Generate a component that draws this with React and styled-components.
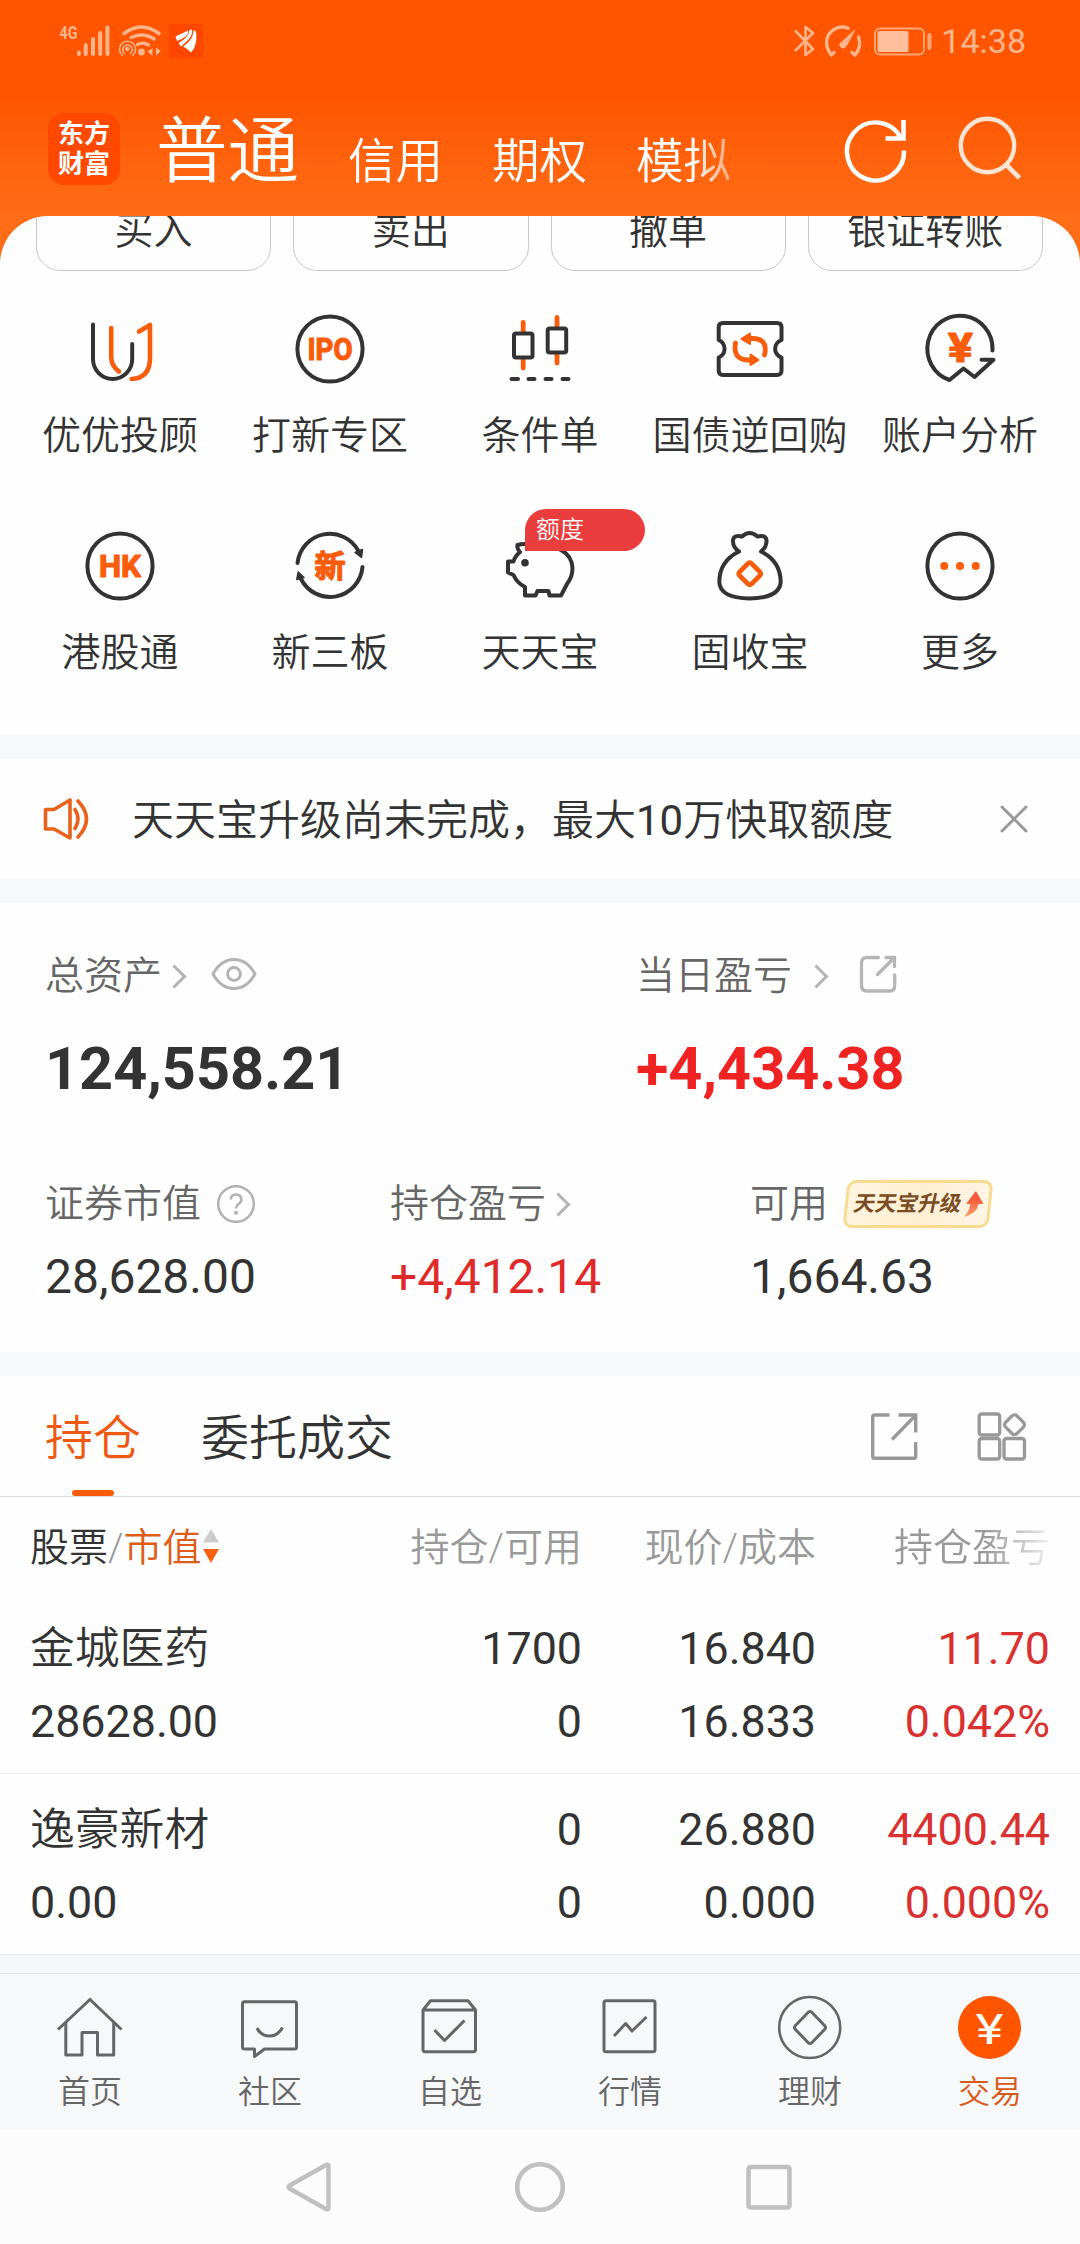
import React from "react";
import styled, { createGlobalStyle } from "styled-components";

const DARK = "#333333";
const ORANGE = "#f95d0b";

const shortcuts = [
  { label: "优优投顾", icon: <AdvisorIcon /> },
  { label: "打新专区", icon: <IpoIcon /> },
  { label: "条件单", icon: <CandleIcon /> },
  { label: "国债逆回购", icon: <RepoIcon /> },
  { label: "账户分析", icon: <AnalysisIcon /> },
  { label: "港股通", icon: <HkIcon /> },
  { label: "新三板", icon: <NewBoardIcon /> },
  { label: "天天宝", icon: <PiggyIcon />, badge: "额度" },
  { label: "固收宝", icon: <MoneyBagIcon /> },
  { label: "更多", icon: <MoreIcon /> },
];

const holdings = [
  {
    name: "金城医药",
    value: "28628.00",
    amount: "1700",
    available: "0",
    price: "16.840",
    cost: "16.833",
    profit: "11.70",
    rate: "0.042%",
  },
  {
    name: "逸豪新材",
    value: "0.00",
    amount: "0",
    available: "0",
    price: "26.880",
    cost: "0.000",
    profit: "4400.44",
    rate: "0.000%",
  },
];

const navItems = [
  { label: "首页", icon: <HomeIcon /> },
  { label: "社区", icon: <CommunityIcon /> },
  { label: "自选", icon: <WatchlistIcon /> },
  { label: "行情", icon: <MarketIcon /> },
  { label: "理财", icon: <WealthIcon /> },
  { label: "交易", icon: <TradeIcon />, active: true },
];

function App() {
  return (
    <Page>
      <GlobalStyle />
      <Header>
        <StatusBar>
          <StatusGroup $gap="8px">
            <SignalIcon />
            <WifiIcon />
            <AppBadgeIcon />
          </StatusGroup>
          <StatusGroup $gap="9px">
            <BluetoothIcon />
            <GaugeIcon />
            <BatteryIcon />
            <Clock>14:38</Clock>
          </StatusGroup>
        </StatusBar>
        <TitleBar>
          <Logo>
            <span>东方</span>
            <span>财富</span>
          </Logo>
          <AccountTabs>
            <AccountTab $active>普通</AccountTab>
            <AccountTab>信用</AccountTab>
            <AccountTab>期权</AccountTab>
            <AccountTab>模拟</AccountTab>
          </AccountTabs>
          <HeaderActions>
            <RefreshIcon />
            <SearchIcon />
          </HeaderActions>
        </TitleBar>
      </Header>

      <PanelWrap>
        <Panel>
          <QuickActions>
            <QuickButton>买入</QuickButton>
            <QuickButton>卖出</QuickButton>
            <QuickButton>撤单</QuickButton>
            <QuickButton>银证转账</QuickButton>
          </QuickActions>
          <ShortcutGrid>
            {shortcuts.map((item) => (
              <Shortcut key={item.label}>
                {item.icon}
                {item.badge && <ShortcutBadge>{item.badge}</ShortcutBadge>}
                <ShortcutLabel>{item.label}</ShortcutLabel>
              </Shortcut>
            ))}
          </ShortcutGrid>
        </Panel>
      </PanelWrap>
      <Divider />

      <Notice>
        <SpeakerIcon />
        <NoticeText>
          天天宝升级尚未完成，最大<Num>10</Num>万快取额度
        </NoticeText>
        <CloseIcon />
      </Notice>
      <Divider />

      <Assets>
        <AssetRow $columns="591px 1fr">
          <div>
            <AssetLabel>
              总资产
              <Chevron $left="9px" />
              <EyeIcon />
            </AssetLabel>
            <TotalValue>124,558.21</TotalValue>
          </div>
          <div>
            <AssetLabel>
              当日盈亏
              <Chevron $left="21px" />
              <ShareIcon />
            </AssetLabel>
            <TotalValue $up>+4,434.38</TotalValue>
          </div>
        </AssetRow>
        <AssetRow $columns="345px 360px 1fr" $top="80px">
          <div>
            <AssetLabel>
              证券市值
              <HelpIcon />
            </AssetLabel>
            <AssetValue>28,628.00</AssetValue>
          </div>
          <div>
            <AssetLabel>
              持仓盈亏
              <Chevron $left="9px" />
            </AssetLabel>
            <AssetValue $up>+4,412.14</AssetValue>
          </div>
          <div>
            <AssetLabel>
              可用
              <UpgradeTag>
                <UpgradeText>天天宝升级</UpgradeText>
                <UpArrowIcon />
              </UpgradeTag>
            </AssetLabel>
            <AssetValue>1,664.63</AssetValue>
          </div>
        </AssetRow>
      </Assets>
      <Divider />

      <Tabs>
        <Tab $active>持仓</Tab>
        <Tab>委托成交</Tab>
        <TabTools>
          <ExportIcon />
          <GridIcon />
        </TabTools>
      </Tabs>

      <TableHead>
        <SortCell>
          <b>股票</b>/<em>市值</em>
          <SortIcon />
        </SortCell>
        <HeadCell>持仓/可用</HeadCell>
        <HeadCell>现价/成本</HeadCell>
        <HeadCell $fade>持仓盈亏</HeadCell>
      </TableHead>
      {holdings.map((row) => (
        <TableRow key={row.name}>
          <Cell $left>
            <StockName>{row.name}</StockName>
            <span>{row.value}</span>
          </Cell>
          <Cell>
            <span>{row.amount}</span>
            <span>{row.available}</span>
          </Cell>
          <Cell>
            <span>{row.price}</span>
            <span>{row.cost}</span>
          </Cell>
          <Cell $up>
            <span>{row.profit}</span>
            <span>{row.rate}</span>
          </Cell>
        </TableRow>
      ))}
      <Filler />

      <BottomNav>
        {navItems.map((item) => (
          <NavItem key={item.label} $active={item.active}>
            {item.icon}
            {item.label}
          </NavItem>
        ))}
      </BottomNav>
      <SystemNav>
        <svg width="52" height="52" fill="none" stroke="#c0c0c0" strokeWidth="4.4" strokeLinejoin="round">
          <path d="M44.500 4.5V47.5Q44 49 42 48L5.500 27.500Q3.500 26 5.500 24.500L42 4Q44 3 44.500 4.500Z" />
        </svg>
        <svg width="52" height="52" fill="none" stroke="#c0c0c0" strokeWidth="4.6">
          <circle cx="26" cy="26" r="22.800" />
        </svg>
        <svg width="52" height="52" fill="none" stroke="#c0c0c0" strokeWidth="4.6">
          <rect x="4.500" y="6" width="41" height="40.500" rx="2" />
        </svg>
      </SystemNav>
    </Page>
  );
}

/* ---------- status bar icons ---------- */

function SignalIcon() {
  return (
    <svg width="51" height="34" stroke="#ffb58c" strokeWidth="4" strokeLinecap="round">
      <text x="0.500" y="15" fontFamily="Roboto" fontSize="18.500" fontWeight="700" fill="#ffb58c" stroke="none" textLength="18" lengthAdjust="spacingAndGlyphs">
        4G
      </text>
      <path d="M19.900 28.500V30M26.700 21V30M34 15V30M41.200 9V30M48.400 3.500V30" />
    </svg>
  );
}

function WifiIcon() {
  return (
    <svg width="43" height="34" fill="none" stroke="#ffb58c" strokeWidth="3" strokeLinecap="round">
      <path d="M6 9.500Q23.500 -3.500 41 9.500" strokeWidth="3.600" />
      <path d="M13 13.500Q25 8 36 15" strokeWidth="3.400" />
      <path d="M19.500 20.500Q25 17.500 30.500 21" strokeWidth="3.400" />
      <circle cx="23.500" cy="28" r="3.400" fill="#ffb58c" stroke="none" />
      <circle cx="9.400" cy="25" r="2.200" fill="#ffb58c" stroke="none" />
      <path d="M6.500 29.500A4.800 4.800 0 1 1 12.500 29.500" strokeWidth="1.600" />
      <path d="M4.500 31.500A8 8 0 1 1 14.500 31.500" strokeWidth="1.600" />
      <path d="M34.500 24V32L29.500 27.500ZM38 23.500V31.500L43 27Z" fill="#ffb58c" stroke="none" />
    </svg>
  );
}

function AppBadgeIcon() {
  return (
    <svg width="34" height="34">
      <rect width="34" height="34" fill="#ff4600" />
      <path d="M6.500 12.500L19 6.500Q20 11 13.500 14.500L8 17Z" fill="#fff" />
      <path d="M20.500 6L23 5.500Q24 12 17.500 17.500L12 22.500L9.500 19Q19.500 14 20.500 6Z" fill="#fff" />
      <path d="M24.500 6L27 7.500Q28.500 16 25 24.500L22 28.500L17.500 24.500L14 22.500Q24.500 16 24.500 6Z" fill="#fff" />
    </svg>
  );
}

function BluetoothIcon() {
  return (
    <svg width="21" height="34" fill="none" stroke="#ffb58c" strokeWidth="2.600" strokeLinejoin="round">
      <path d="M0 6.500L18 25L10.500 31V3L18 9L0 27" />
    </svg>
  );
}

function GaugeIcon() {
  return (
    <svg width="38" height="34" fill="none" stroke="#ffb58c" strokeWidth="3.400" strokeLinecap="round">
      <path d="M23 4.200A15.800 15.800 0 0 0 1.500 18Q1.500 25 6.500 31L9 28.500" />
      <path d="M33.500 13Q37 23 30 31L27 28.500" />
      <path d="M29.500 6.500L21 22.500Q18.500 25.500 15.500 23Q13.500 20 16.500 18Z" fill="#ffb58c" strokeWidth="1" />
    </svg>
  );
}

function BatteryIcon() {
  return (
    <svg width="60" height="34" fill="none" stroke="#ffa877">
      <rect x="3" y="4.500" width="49" height="26" rx="5" strokeWidth="1.800" />
      <rect x="5.500" y="7" width="31" height="21" rx="1.500" fill="#ffbf9b" stroke="none" />
      <path d="M57.500 11V24" strokeWidth="4" strokeLinecap="round" />
    </svg>
  );
}

/* ---------- header icons ---------- */

function RefreshIcon() {
  return (
    <svg width="66" height="66" fill="none" stroke="#fff" strokeWidth="4.400">
      <path d="M61 34.500A28.500 29 0 1 1 57.500 21.500" />
      <path d="M60.500 4V22.500H42.500" strokeWidth="4.600" />
    </svg>
  );
}

function SearchIcon() {
  return (
    <svg width="66" height="66" fill="none" stroke="#ffe3d3" strokeWidth="4.400">
      <circle cx="30.500" cy="29.500" r="26.700" />
      <path d="M49 48.500L62.500 62" strokeWidth="4.600" />
    </svg>
  );
}

/* ---------- shortcut icons ---------- */

function Glyph({ children }) {
  return (
    <svg width="72" height="72" fill="none" stroke={DARK} strokeWidth="4" strokeLinecap="round" strokeLinejoin="round">
      {children}
    </svg>
  );
}

function AdvisorIcon() {
  return (
    <Glyph>
      <path d="M9 11.500V46A19.600 20 0 0 0 48.200 46V31" />
      <path d="M27.200 15V44Q27.200 53 35 58.500M55 18.500L66 12V45Q66 65 47.500 66" stroke={ORANGE} strokeWidth="4.600" />
    </Glyph>
  );
}

function IpoIcon() {
  return (
    <Glyph>
      <circle cx="36" cy="36" r="32.600" />
      <IconText x="36" y="47" fontSize="31" textLength="45" lengthAdjust="spacingAndGlyphs">
        IPO
      </IconText>
    </Glyph>
  );
}

function CandleIcon() {
  return (
    <Glyph>
      <path d="M19.200 9.500V19M19.200 46V55M53 4.500V14M53 41V50" stroke={ORANGE} strokeWidth="4.800" />
      <rect x="10" y="20.500" width="18.500" height="24" rx="2" />
      <rect x="43.700" y="15.500" width="18.500" height="24" rx="2" />
      <path d="M7.500 66H14M24.500 66H30.500M41.500 66H47.500M58.500 66H64.500" />
    </Glyph>
  );
}

function RepoIcon() {
  return (
    <Glyph>
      <path d="M9 10H63Q67.500 10 67.500 14V27C59 30.500 59 41 67.500 44.500V57.500Q67.500 62 63 62H9Q4.700 62 4.700 57.500V44.500C12.500 41 12.500 30.500 4.700 27V14Q4.700 10 9 10Z" />
      <g stroke={ORANGE} strokeWidth="4.800">
        <path d="M21.500 30Q18.500 46.500 34 47H38" />
        <path d="M36.500 41.500V52L44.500 47Z" fill={ORANGE} strokeWidth="2" />
        <path d="M50.500 42Q54.500 26 39 25.500H34" />
        <path d="M36 20.500V31L27.500 25.800Z" fill={ORANGE} strokeWidth="2" />
      </g>
    </Glyph>
  );
}

function AnalysisIcon() {
  return (
    <Glyph>
      <path d="M68.500 37.500A32.600 33 0 1 0 25.500 67L39.500 55.500L50.500 64L69.500 46.800H57.500" />
      <IconText x="36.500" y="48.500" fontSize="41" textLength="25" lengthAdjust="spacingAndGlyphs">
        ¥
      </IconText>
    </Glyph>
  );
}

function HkIcon() {
  return (
    <Glyph>
      <circle cx="36" cy="36" r="32.600" />
      <IconText x="36" y="47" fontSize="31" textLength="42" lengthAdjust="spacingAndGlyphs">
        HK
      </IconText>
    </Glyph>
  );
}

function NewBoardIcon() {
  return (
    <Glyph>
      <path d="M3.500 33A32.600 33 0 0 1 64.500 21" />
      <path d="M61 22.500L68.500 19.500L67.500 27.500Z" fill={DARK} strokeWidth="1.500" />
      <path d="M68.500 37A32.600 33 0 0 1 7 49" />
      <path d="M10 47.500L2.800 49.500L4.200 42Z" fill={DARK} strokeWidth="1.500" />
      <IconText x="36" y="47" fontSize="31">
        新
      </IconText>
    </Glyph>
  );
}

function PiggyIcon() {
  return (
    <Glyph>
      <path d="M28 15Q20 13 13.500 15Q12.500 18 16 22Q11 26 9.500 31.500H4V42.500L9.500 45Q13 53 21 57V65.500H31.500L33.500 61H44.500L45.500 65.500H57L63 54Q68.500 47 68.500 38Q68 26 57 20Q46 15 38 18" />
      <circle cx="21" cy="32.700" r="3.800" fill={DARK} stroke="none" />
    </Glyph>
  );
}

function MoneyBagIcon() {
  return (
    <Glyph>
      <path d="M25 21.500Q18.500 17 19 10Q20 4.500 28 6.500Q35.700 -0.500 43.500 6.500Q51.500 4.500 52.500 10Q53 17 47 21.500Q66.500 31 66.700 52Q65.500 68 35.700 68.500Q6 68 5.300 52Q5.500 31 25 21.500" />
      <path d="M34 33.500L25.500 42Q24 43.800 25.500 45.500L34 54Q35.700 55.500 37.500 54L46 45.500Q47.500 43.800 46 42L37.500 33.500Q35.700 32 34 33.500Z" stroke={ORANGE} strokeWidth="4.600" />
    </Glyph>
  );
}

function MoreIcon() {
  return (
    <Glyph>
      <circle cx="36" cy="36" r="32.600" />
      <g fill={ORANGE} stroke="none">
        <circle cx="20.300" cy="36" r="4" />
        <circle cx="36" cy="36" r="4" />
        <circle cx="51.700" cy="36" r="4" />
      </g>
    </Glyph>
  );
}

/* ---------- inline icons ---------- */

function SpeakerIcon() {
  return (
    <svg width="48" height="44" fill="none" stroke="#e8621c" strokeWidth="3.600" strokeLinejoin="round" strokeLinecap="round">
      <path d="M2.500 12.500H11L27 3V41L11 32H2.500Z" />
      <path d="M32 12.500Q38 22 32 31.500M35 4Q52 22 35 40" />
    </svg>
  );
}

function CloseIcon() {
  return (
    <svg width="30" height="30" fill="none" stroke="#999" strokeWidth="3" strokeLinecap="round">
      <path d="M3 3L27 27M27 3L3 27" />
    </svg>
  );
}

function EyeIcon() {
  return (
    <EyeSvg width="46" height="34" fill="none" stroke="#b3b3b3" strokeWidth="3">
      <path d="M2 17Q10 2.500 23 2.500T44 17Q36 31.500 23 31.500T2 17Z" strokeLinejoin="round" />
      <circle cx="23" cy="17" r="6.400" />
    </EyeSvg>
  );
}

function ShareIcon() {
  return (
    <ShareSvg width="40" height="40" fill="none" stroke="#b5b5b5" strokeWidth="3.300" strokeLinecap="round">
      <path d="M20.500 3.500H9Q3.500 3.500 3.500 9V31.500Q3.500 37 9 37H31.500Q36.700 37 36.700 31.500V21" />
      <path d="M28 3.500H36.500V12.500M35.500 4.500L19.500 20.500" />
    </ShareSvg>
  );
}

function HelpIcon() {
  return (
    <HelpSvg width="40" height="40">
      <circle cx="20" cy="20" r="17.800" fill="none" stroke="#b3b3b3" strokeWidth="2.600" />
      <path d="M14.800 15.500Q15 10.500 20 10.500T25.500 15.500Q25.500 18 22.500 20Q20 21.800 20 24.500" fill="none" stroke="#b3b3b3" strokeWidth="2.600" />
      <circle cx="20" cy="28.800" r="2" fill="#b3b3b3" />
    </HelpSvg>
  );
}

function UpArrowIcon() {
  return (
    <svg width="21" height="26" viewBox="0 0 21 26">
      <defs>
        <linearGradient id="up" x1="0" y1="0" x2="0" y2="1">
          <stop offset="0.300" stopColor="#f9593a" />
          <stop offset="1" stopColor="#fba36e" />
        </linearGradient>
      </defs>
      <path d="M11.500 0L20.500 13H15.500Q15 23 2 26Q7 21 7.500 13H3Z" fill="url(#up)" />
    </svg>
  );
}

function ExportIcon() {
  return (
    <svg width="50" height="50" fill="none" stroke="#999" strokeWidth="3.400">
      <path d="M20.500 4H5.500Q3.700 4 3.700 5.800V45.500Q3.700 47.200 5.500 47.200H45Q46.700 47.200 46.700 45.500V31" />
      <path d="M29.500 4H46.700V21.500M46 5L23 28.500" />
    </svg>
  );
}

function GridIcon() {
  return (
    <svg width="50" height="50" fill="none" stroke="#999" strokeWidth="3.300">
      <rect x="2.200" y="3" width="20.500" height="21" rx="2.500" />
      <rect x="2.200" y="27.500" width="20.500" height="20.500" rx="2.500" />
      <rect x="27" y="27.500" width="20.500" height="20.500" rx="2.500" />
      <rect x="29.500" y="5.700" width="16" height="16" rx="3.500" transform="rotate(45 37.500 13.700)" />
    </svg>
  );
}

function SortIcon() {
  return (
    <SortSvg width="18" height="36">
      <path d="M9 1L17 14.500H1Z" fill="#ccc" />
      <path d="M9 35L17 21H1Z" fill="#f9600f" />
    </SortSvg>
  );
}

/* ---------- bottom navigation icons ---------- */

function NavGlyph({ children }) {
  return (
    <svg width="66" height="66" fill="none" stroke="#666" strokeWidth="3" strokeLinejoin="round">
      {children}
    </svg>
  );
}

function HomeIcon() {
  return (
    <NavGlyph>
      <path d="M1 34.500L33 4.500L64.500 34.500" strokeLinejoin="miter" />
      <path d="M8.800 28V60H25V37.500H40.500V60H56.700V28" />
    </NavGlyph>
  );
}

function CommunityIcon() {
  return (
    <NavGlyph>
      <path d="M7.500 6.700H57.500Q59.500 6.700 59.500 8.700V52Q59.500 54 57.500 54H27.500L17.500 61.500V54H7.500Q5.500 54 5.500 52V8.700Q5.500 6.700 7.500 6.700Z" />
      <path d="M20 33Q24 41 32.500 41T45.500 32.500" />
    </NavGlyph>
  );
}

function WatchlistIcon() {
  return (
    <NavGlyph>
      <path d="M6 15L13.500 5.800H51L58.500 15V54.500Q58.500 56.700 56.500 56.700H8Q6 56.700 6 54.500ZM6 15H58.500" />
      <path d="M17.500 35L27.500 45.500L47.500 25.500" />
    </NavGlyph>
  );
}

function MarketIcon() {
  return (
    <NavGlyph>
      <rect x="7" y="5.800" width="51" height="51" rx="2" />
      <path d="M17 41L28.700 28.500L35 36L49.500 22" />
    </NavGlyph>
  );
}

function WealthIcon() {
  return (
    <NavGlyph>
      <circle cx="32.700" cy="32.500" r="30.500" strokeWidth="2.600" />
      <path d="M31.500 17L18 31Q17 32.500 18 34L31.500 48Q33 49 34.500 48L48 34Q49 32.500 48 31L34.500 17Q33 16 31.500 17Z" />
    </NavGlyph>
  );
}

function TradeIcon() {
  return (
    <svg width="66" height="66">
      <circle cx="32.500" cy="32.500" r="31.500" fill="#ff5500" />
      <text x="32.500" y="49" fontFamily="Roboto" fontSize="43" fontWeight="400" fill="#fff" textAnchor="middle" textLength="28" lengthAdjust="spacingAndGlyphs">
        ¥
      </text>
    </svg>
  );
}

const GlobalStyle = createGlobalStyle`
  * {
    box-sizing: border-box;
  }
  body {
    margin: 0;
    background: #fcfcfc;
  }
  svg {
    display: block;
    flex: none;
    overflow: visible;
  }
`;

const Page = styled.div`
  display: flex;
  flex-direction: column;
  width: 1080px;
  height: 2244px;
  overflow: hidden;
  background: #fefefe;
  color: #333;
  font-family: Roboto, "Noto Sans CJK SC", sans-serif;
  font-weight: 350;
`;

const Header = styled.header`
  flex: none;
  height: 216px;
  background: linear-gradient(#ff5500 95px, #ff6d17 216px);
`;

const StatusBar = styled.div`
  display: flex;
  justify-content: space-between;
  align-items: center;
  height: 82px;
  padding: 0 54px 0 59px;
`;

const StatusGroup = styled.div`
  display: flex;
  align-items: center;
  gap: ${({ $gap }) => $gap};
`;

const Clock = styled.span`
  font-size: 34px;
  font-weight: 400;
  line-height: 40px;
  color: #ffb58c;
`;

const TitleBar = styled.div`
  display: flex;
  align-items: center;
  height: 134px;
  padding: 0 57px 0 48px;
`;

const Logo = styled.div`
  display: flex;
  flex-direction: column;
  align-items: center;
  justify-content: center;
  width: 72px;
  height: 72px;
  border-radius: 16px;
  background: #ff4800;
  color: #fff;
  font-size: 26px;
  font-weight: 700;
  line-height: 30px;
`;

const AccountTabs = styled.nav`
  display: flex;
  flex: 1;
  align-items: flex-end;
  gap: 49px;
  margin-left: 36px;
  padding-top: 6px;
  color: #fff;
  -webkit-mask-image: linear-gradient(90deg, #000 535px, transparent 605px);
  mask-image: linear-gradient(90deg, #000 535px, transparent 605px);
`;

const AccountTab = styled.span`
  font-size: ${({ $active }) => ($active ? "71.5px" : "47.5px")};
  line-height: ${({ $active }) => ($active ? "84px" : "64px")};
`;

const HeaderActions = styled.div`
  display: flex;
  gap: 48px;
`;

const PanelWrap = styled.div`
  flex: none;
  background: #ff6d17;
`;

const Panel = styled.section`
  overflow: hidden;
  height: 519px;
  border-radius: 48px 48px 0 0;
  background: #fefefe;
`;

const QuickActions = styled.div`
  display: grid;
  grid-template-columns: repeat(4, 1fr);
  gap: 22px;
  margin-top: -30px;
  padding: 0 37px 0 36px;
`;

const QuickButton = styled.button`
  height: 85px;
  padding: 0 0 4px;
  border: 1px solid #c8c8c8;
  border-radius: 24px;
  background: transparent;
  color: #333;
  font: inherit;
  font-size: 39px;
`;

const ShortcutGrid = styled.div`
  display: grid;
  grid-template-columns: repeat(5, 210px);
  row-gap: 69px;
  padding: 42px 15px 0;
`;

const Shortcut = styled.div`
  position: relative;
  display: flex;
  flex-direction: column;
  align-items: center;
`;

const ShortcutLabel = styled.span`
  margin-top: 26px;
  font-size: 39px;
  line-height: 50px;
  white-space: nowrap;
`;

const ShortcutBadge = styled.span`
  position: absolute;
  top: -21px;
  left: 90px;
  width: 120px;
  height: 42px;
  padding-left: 11px;
  border-radius: 21px 21px 21px 0;
  background: #eb3d3d;
  color: #fff;
  font-size: 24px;
  line-height: 43px;
`;

const IconText = styled.text`
  fill: ${ORANGE};
  stroke: ${ORANGE};
  stroke-width: 1.2px;
  font-family: Roboto, "Noto Sans CJK SC", sans-serif;
  font-weight: 700;
  text-anchor: middle;
`;

const Divider = styled.div`
  flex: none;
  height: 24px;
  background: #f7f8fa;
`;

const Notice = styled.section`
  display: flex;
  flex: none;
  align-items: center;
  height: 120px;
  padding: 0 51px 0 43px;
`;

const NoticeText = styled.span`
  flex: 1;
  margin-left: 41px;
  padding-top: 3px;
  font-size: 42px;
  line-height: 50px;
`;

const Num = styled.span`
  font-weight: 400;
`;

const Assets = styled.section`
  flex: none;
  height: 449px;
  padding: 48px 45px 0;
`;

const AssetRow = styled.div`
  display: grid;
  grid-template-columns: ${({ $columns }) => $columns};
  margin-top: ${({ $top }) => $top || 0};
`;

const AssetLabel = styled.div`
  display: flex;
  align-items: center;
  height: 50px;
  color: #666;
  font-size: 39px;
  line-height: 50px;
  white-space: nowrap;
`;

const Chevron = styled.i`
  width: 17px;
  height: 17px;
  margin-left: ${({ $left }) => $left};
  border-top: 3px solid #b3b3b3;
  border-right: 3px solid #b3b3b3;
  transform: translateX(-5px) rotate(45deg);
`;

const EyeSvg = styled.svg`
  margin: 0 0 4px 23px;
`;

const ShareSvg = styled.svg`
  margin: 0 0 4px 28px;
`;

const HelpSvg = styled.svg`
  margin-left: 15px;
`;

const TotalValue = styled.div`
  margin-top: 38px;
  color: ${({ $up }) => ($up ? "#f02323" : "#333")};
  font-size: 59.4px;
  font-weight: 700;
  line-height: 60px;
`;

const AssetValue = styled.div`
  margin-top: 20px;
  color: ${({ $up }) => ($up ? "#e02a2a" : "#333")};
  font-size: 48px;
  font-weight: 400;
  line-height: 56px;
`;

const UpgradeTag = styled.span`
  display: flex;
  align-items: center;
  gap: 1px;
  width: 146px;
  height: 48px;
  margin-left: 17px;
  padding-left: 6px;
  border: 3px solid #f7dc90;
  border-radius: 9px;
  background: linear-gradient(100deg, #fff6e0, #ffeed2 50%, #fff6e6);
  transform: skewX(-6deg);
`;

const UpgradeText = styled.b`
  color: #7a4c25;
  font-size: 21.5px;
  font-weight: 700;
  line-height: 42px;
  transform: skewX(-6deg);
`;

const Tabs = styled.nav`
  display: flex;
  flex: none;
  align-items: center;
  gap: 60px;
  height: 121px;
  padding: 0 53px 0 45px;
  border-bottom: 1px solid #dcdcdc;
`;

const Tab = styled.span`
  position: relative;
  height: 120px;
  padding-top: 3px;
  color: ${({ $active }) => ($active ? "#ee5a12" : "#333")};
  font-size: 48px;
  line-height: 120px;

  &::after {
    content: "";
    position: absolute;
    bottom: 0;
    left: 27px;
    width: 42px;
    height: 6px;
    border-radius: 3px;
    background: ${({ $active }) => ($active ? ORANGE : "transparent")};
  }
`;

const TabTools = styled.div`
  display: flex;
  gap: 58px;
  margin-left: auto;
`;

const TableHead = styled.div`
  display: grid;
  flex: none;
  grid-template-columns: 1fr 280px 234px 234px;
  align-items: center;
  height: 96px;
  padding: 5px 30px 0;
  color: #999;
  font-size: 39px;
  line-height: 50px;
`;

const SortCell = styled.div`
  display: flex;
  align-items: center;

  b,
  em {
    font-style: normal;
    font-weight: 350;
  }
  b {
    color: #333;
  }
  em {
    color: #dc5c18;
  }
`;

const SortSvg = styled.svg`
  margin-bottom: 3px;
`;

const HeadCell = styled.span`
  text-align: right;
  ${({ $fade }) =>
    $fade &&
    `
    -webkit-mask-image: linear-gradient(90deg, #000 170px, transparent 245px);
    mask-image: linear-gradient(90deg, #000 170px, transparent 245px);
  `}
`;

const TableRow = styled.div`
  display: grid;
  flex: none;
  grid-template-columns: 1fr 280px 234px 234px;
  height: 181px;
  padding: 19px 30px 0;
  border-bottom: 1px solid #ececec;
`;

const Cell = styled.div`
  display: flex;
  flex-direction: column;
  align-items: ${({ $left }) => ($left ? "flex-start" : "flex-end")};
  color: ${({ $up }) => ($up ? "#d93030" : "#333")};
  font-size: 44.8px;
  font-weight: 400;
  line-height: 73px;
`;

const StockName = styled.span`
  font-weight: 350;
`;

const Filler = styled.div`
  flex: 1;
  background: #f6f7f9;
`;

const BottomNav = styled.nav`
  display: grid;
  flex: none;
  grid-template-columns: repeat(6, 1fr);
  height: 157px;
  padding-top: 21px;
  border-top: 1px solid #e2e2e5;
  background: #f7f8fa;
`;

const NavItem = styled.div`
  display: flex;
  flex-direction: column;
  align-items: center;
  gap: 11px;
  color: ${({ $active }) => ($active ? "#d85a18" : "#666")};
  font-size: 32px;
  line-height: 40px;
`;

const SystemNav = styled.div`
  display: flex;
  flex: none;
  justify-content: center;
  align-items: center;
  gap: 178px;
  height: 114px;
  background: #fcfcfc;
`;

export default App;
